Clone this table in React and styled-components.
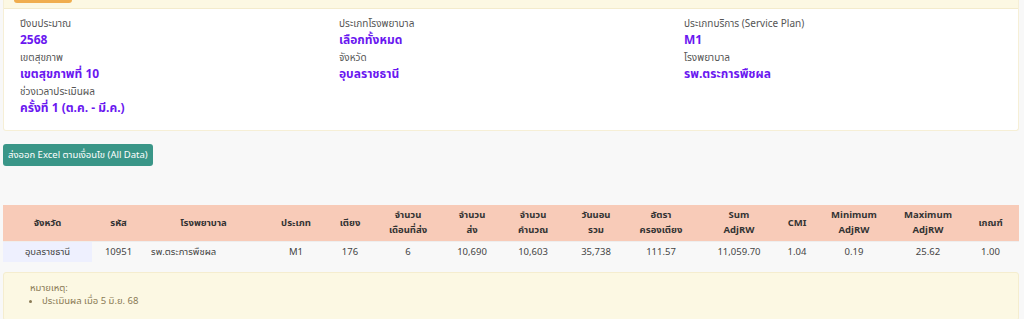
import styled, {createGlobalStyle} from 'styled-components';

const GlobalStyle = createGlobalStyle`
  html, body {
    margin: 0;
    padding: 0;
    background: #f8f8f8;
    font-family: "Noto Sans Thai", "Noto Sans", "Liberation Sans", sans-serif;
  }
`;

const filters = [
  [
    {label: 'ปีงบประมาณ', value: '2568'},
    {label: 'เขตสุขภาพ', value: 'เขตสุขภาพที่ 10'},
    {label: 'ช่วงเวลาประเมินผล', value: 'ครั้งที่ 1 (ต.ค. - มี.ค.)'},
  ],
  [
    {label: 'ประเภทโรงพยาบาล', value: 'เลือกทั้งหมด'},
    {label: 'จังหวัด', value: 'อุบลราชธานี'},
  ],
  [
    {label: 'ประเภทบริการ (Service Plan)', value: 'M1'},
    {label: 'โรงพยาบาล', value: 'รพ.ตระการพืชผล'},
  ],
];

const columns = [
  {title: 'จังหวัด', width: 89},
  {title: 'รหัส', width: 53},
  {title: 'โรงพยาบาล', width: 117},
  {title: 'ประเภท', width: 68},
  {title: 'เตียง', width: 40},
  {title: ['จำนวน', 'เดือนที่ส่ง'], width: 76},
  {title: ['จำนวน', 'ส่ง'], width: 52},
  {title: ['จำนวน', 'คำนวณ'], width: 70},
  {title: ['วันนอน', 'รวม'], width: 56},
  {title: ['อัตรา', 'ครองเตียง'], width: 74},
  {title: ['Sum', 'AdjRW'], width: 82},
  {title: 'CMI', width: 34},
  {title: ['Minimum', 'AdjRW'], width: 80},
  {title: ['Maximum', 'AdjRW'], width: 68},
  {title: 'เกณฑ์', width: 57},
];

const row = ['อุบลราชธานี', '10951', 'รพ.ตระการพืชผล', 'M1', '176', '6', '10,690', '10,603', '35,738', '111.57', '11,059.70', '1.04', '0.19', '25.62', '1.00'];

function App() {
  return (
    <Page>
      <GlobalStyle />
      <Card>
        <CardHeader>
          <HeaderTab />
        </CardHeader>
        <CardBody>
          {filters.map((col, i) => (
            <FilterColumn key={i}>
              {col.map(f => (
                <Field key={f.label}>
                  <Label>{f.label}</Label>
                  <Value>{f.value}</Value>
                </Field>
              ))}
            </FilterColumn>
          ))}
        </CardBody>
      </Card>

      <ExportButton>ส่งออก Excel ตามเงื่อนไข (All Data)</ExportButton>

      <Table>
        <colgroup>
          {columns.map((c, i) => <col key={i} style={{width: c.width}} />)}
        </colgroup>
        <thead>
          <tr>
            {columns.map((c, i) => (
              <Th key={i}>
                {Array.isArray(c.title) ? <>{c.title[0]}<br />{c.title[1]}</> : c.title}
              </Th>
            ))}
          </tr>
        </thead>
        <tbody>
          <tr>
            {row.map((v, i) => (
              <Td key={i} $first={i === 0} $left={i === 2}>{v}</Td>
            ))}
          </tr>
        </tbody>
      </Table>

      <Note>
        <NoteTitle>หมายเหตุ:</NoteTitle>
        <NoteList>
          <li>ประเมินผล เมื่อ 5 มิ.ย. 68</li>
        </NoteList>
      </Note>
    </Page>
  );
}

const Page = styled.div`
  padding: 0 5px 0 3px;
`;

const Card = styled.div`
  background: #fff;
  border: 1px solid #f6efd6;
  border-top: none;
  border-radius: 0 0 3px 3px;
`;

const CardHeader = styled.div`
  height: 8px;
  background: #fcf8e3;
  border-bottom: 1px solid #f3ebcc;
  padding-left: 10px;
`;

const HeaderTab = styled.div`
  width: 58px;
  height: 3px;
  background: #f0ad4e;
  border-radius: 0 0 3px 3px;
`;

const CardBody = styled.div`
  display: grid;
  grid-template-columns: 319px 345px 1fr;
  padding: 8px 16px 14px;
`;

const FilterColumn = styled.div`
  display: flex;
  flex-direction: column;
  gap: 3px;
`;

const Field = styled.div`
  display: flex;
  flex-direction: column;
`;

const Label = styled.div`
  font-size: 10px;
  line-height: 15px;
  color: #555;
`;

const Value = styled.div`
  font-size: 12px;
  line-height: 16px;
  font-weight: 700;
  color: #6a17f0;
`;

const ExportButton = styled.button`
  display: block;
  margin-top: 13px;
  height: 22px;
  padding: 0 5px;
  background: #3a9688;
  color: #fff;
  border: none;
  border-radius: 3px;
  font-family: inherit;
  font-size: 9.5px;
`;

const Table = styled.table`
  width: 100%;
  margin-top: 39px;
  border-collapse: collapse;
  table-layout: fixed;
`;

const Th = styled.th`
  background: #f8cbb8;
  height: 36px;
  padding: 0 4px;
  font-size: 9.5px;
  line-height: 15px;
  font-weight: 700;
  color: #333;
  text-align: center;
  vertical-align: middle;
`;

const Td = styled.td`
  height: 20px;
  padding: 0 6px;
  font-size: 9.5px;
  color: #444;
  text-align: ${p => (p.$left ? 'left' : 'center')};
  background: ${p => (p.$first ? '#eef0fe' : 'transparent')};
  border-top: 1px solid #eee;
`;

const Note = styled.div`
  margin-top: 10px;
  padding: 9px 16px 12px;
  background: #fcf8e3;
  border: 1px solid #f5edcf;
  border-radius: 3px;
  color: #8a7a55;
  font-size: 9.5px;
  line-height: 13px;
`;

const NoteTitle = styled.div`
  padding-left: 10px;
`;

const NoteList = styled.ul`
  margin: 0;
  padding-left: 22px;
`;

export default App;
